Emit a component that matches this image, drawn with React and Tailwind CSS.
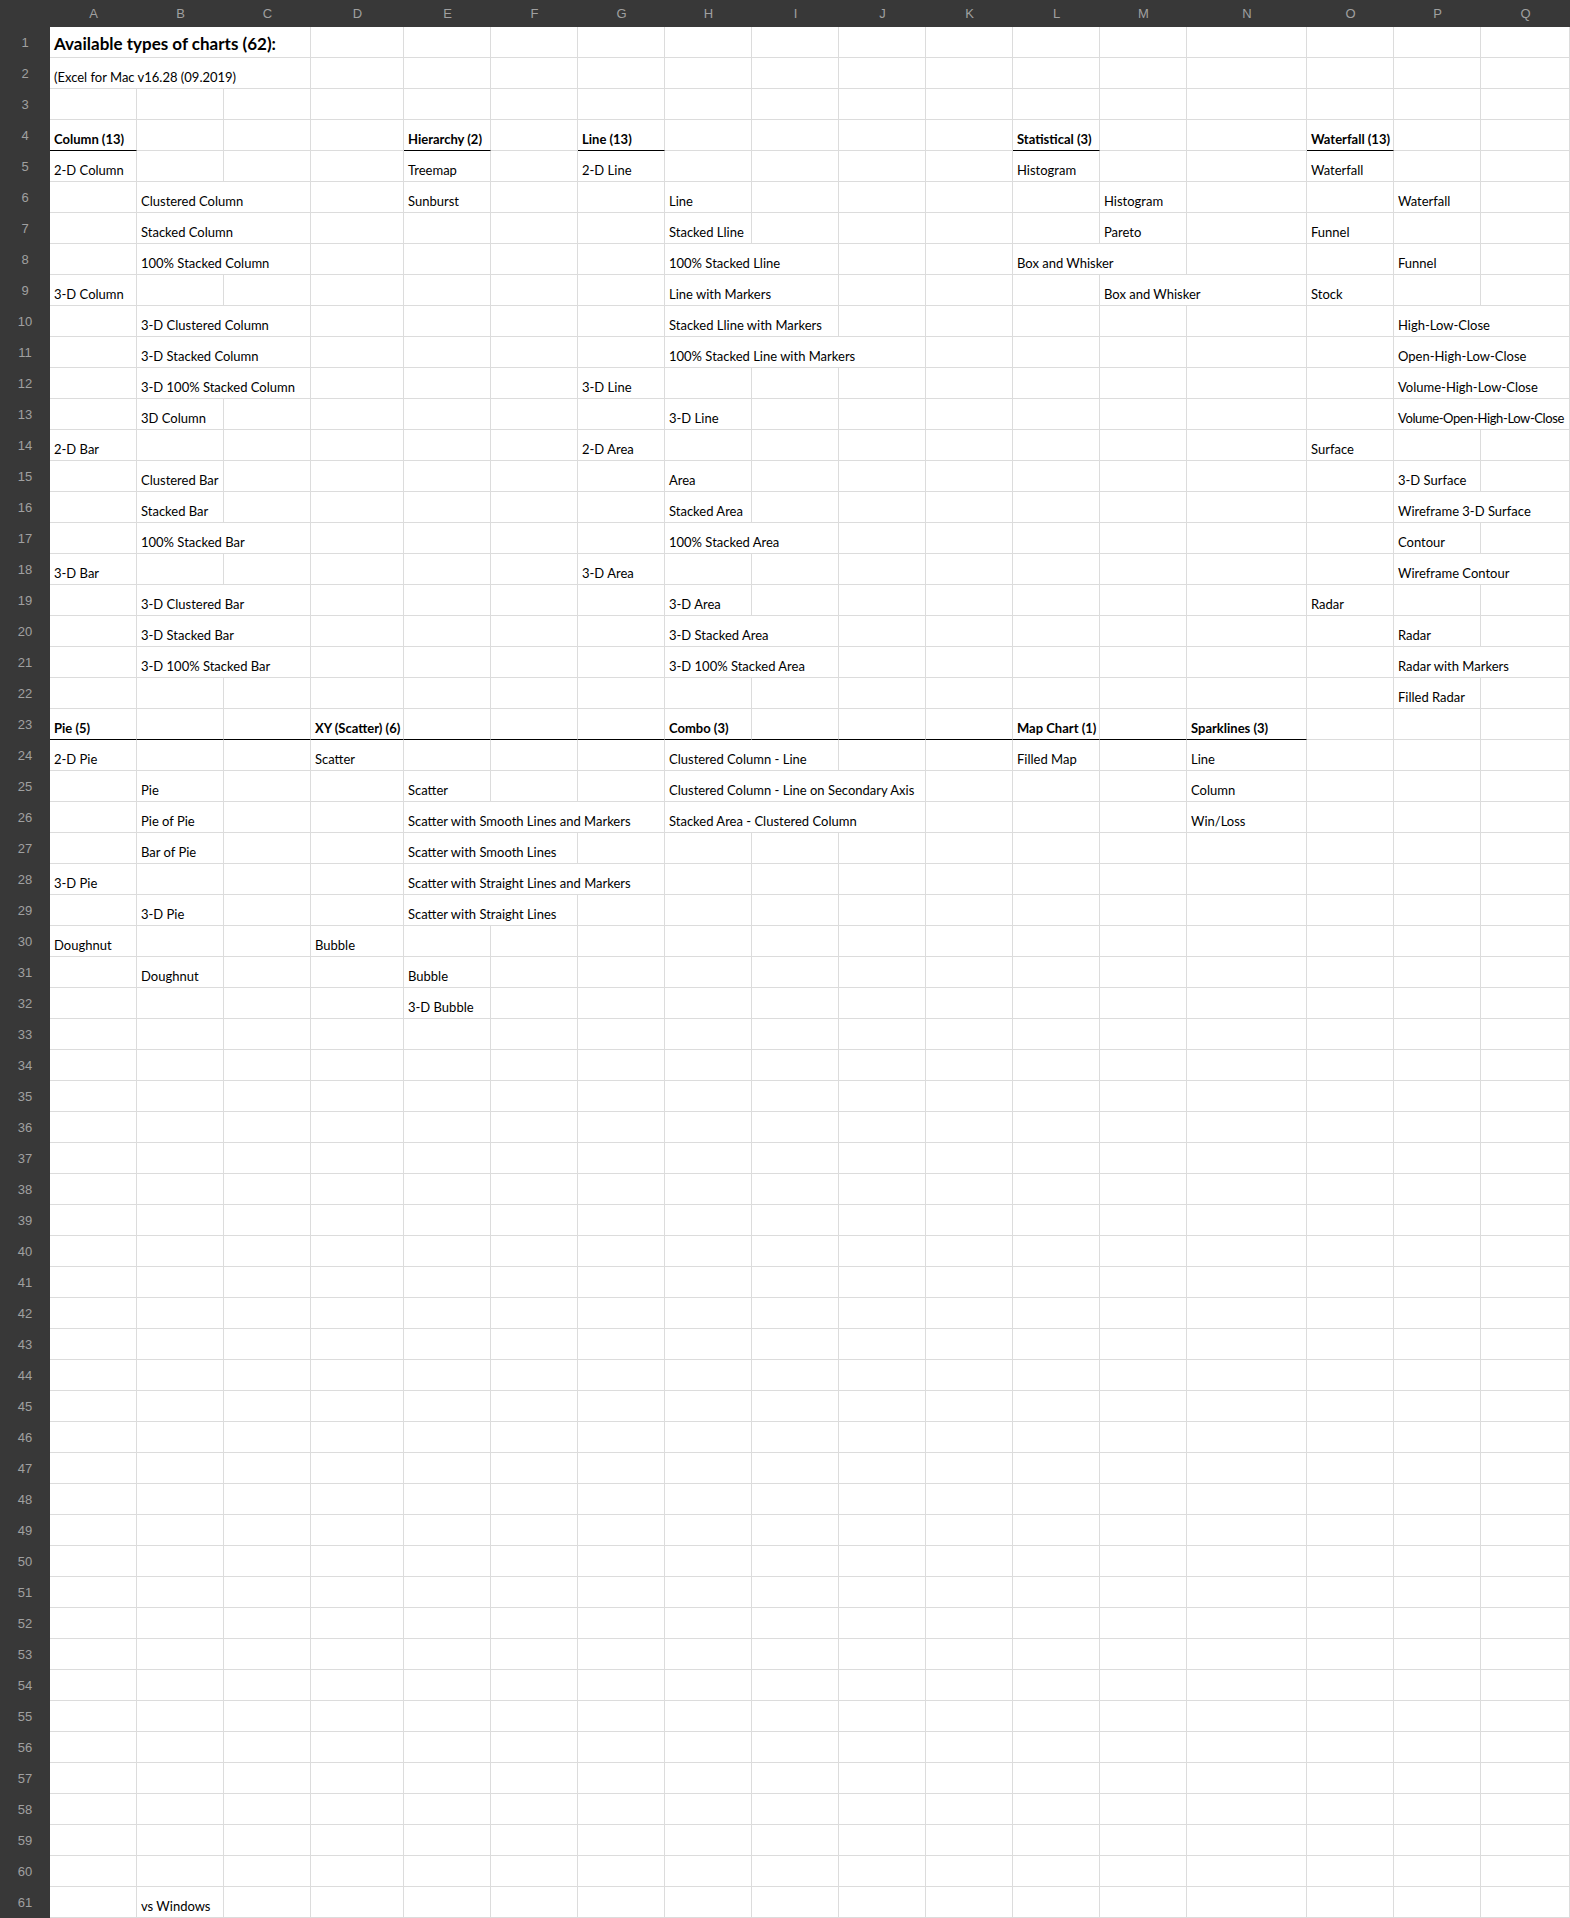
import React from 'react';

const COLS = ['A', 'B', 'C', 'D', 'E', 'F', 'G', 'H', 'I', 'J', 'K', 'L', 'M', 'N', 'O', 'P', 'Q'];
const WIDTHS = [87, 87, 87, 93, 87, 87, 87, 87, 87, 87, 87, 87, 87, 120, 87, 87, 89];

const W_CLASS = {
  87: 'w-[87px]',
  89: 'w-[89px]',
  93: 'w-[93px]',
  120: 'w-[120px]',
  174: 'w-[174px]',
  176: 'w-[176px]',
  207: 'w-[207px]',
  261: 'w-[261px]'
};

// [column, text, span, kind]
const ROWS = {
  1: [['A', 'Available types of charts (62):', 3, 'title']],
  2: [['A', '(Excel for Mac v16.28 (09.2019)', 3]],
  4: [['A', 'Column (13)', 1, 'head'], ['E', 'Hierarchy (2)', 1, 'head'], ['G', 'Line (13)', 1, 'head'], ['L', 'Statistical (3)', 1, 'head'], ['O', 'Waterfall (13)', 1, 'head']],
  5: [['A', '2-D Column'], ['E', 'Treemap'], ['G', '2-D Line'], ['L', 'Histogram'], ['O', 'Waterfall']],
  6: [['B', 'Clustered Column', 2], ['E', 'Sunburst'], ['H', 'Line'], ['M', 'Histogram'], ['P', 'Waterfall']],
  7: [['B', 'Stacked Column', 2], ['H', 'Stacked Lline'], ['M', 'Pareto'], ['O', 'Funnel']],
  8: [['B', '100% Stacked Column', 2], ['H', '100% Stacked Lline', 2], ['L', 'Box and Whisker', 2], ['P', 'Funnel']],
  9: [['A', '3-D Column'], ['H', 'Line with Markers', 2], ['M', 'Box and Whisker', 2], ['O', 'Stock']],
  10: [['B', '3-D Clustered Column', 2], ['H', 'Stacked Lline with Markers', 2], ['P', 'High-Low-Close', 2]],
  11: [['B', '3-D Stacked Column', 2], ['H', '100% Stacked Line with Markers', 3], ['P', 'Open-High-Low-Close', 2]],
  12: [['B', '3-D 100% Stacked Column', 2], ['G', '3-D Line'], ['P', 'Volume-High-Low-Close', 2]],
  13: [['B', '3D Column'], ['H', '3-D Line'], ['P', 'Volume-Open-High-Low-Close', 2, 'tight']],
  14: [['A', '2-D Bar'], ['G', '2-D Area'], ['O', 'Surface']],
  15: [['B', 'Clustered Bar'], ['H', 'Area'], ['P', '3-D Surface']],
  16: [['B', 'Stacked Bar'], ['H', 'Stacked Area'], ['P', 'Wireframe 3-D Surface', 2]],
  17: [['B', '100% Stacked Bar', 2], ['H', '100% Stacked Area', 2], ['P', 'Contour']],
  18: [['A', '3-D Bar'], ['G', '3-D Area'], ['P', 'Wireframe Contour', 2]],
  19: [['B', '3-D Clustered Bar', 2], ['H', '3-D Area'], ['O', 'Radar']],
  20: [['B', '3-D Stacked Bar', 2], ['H', '3-D Stacked Area', 2], ['P', 'Radar']],
  21: [['B', '3-D 100% Stacked Bar', 2], ['H', '3-D 100% Stacked Area', 2], ['P', 'Radar with Markers', 2]],
  22: [['P', 'Filled Radar']],
  23: [['A', 'Pie (5)', 1, 'head'], ['D', 'XY (Scatter) (6)', 1, 'head'], ['H', 'Combo (3)', 1, 'head'], ['L', 'Map Chart (1)', 1, 'head'], ['N', 'Sparklines (3)', 1, 'head']],
  24: [['A', '2-D Pie'], ['D', 'Scatter'], ['H', 'Clustered Column - Line', 2], ['L', 'Filled Map'], ['N', 'Line']],
  25: [['B', 'Pie'], ['E', 'Scatter'], ['H', 'Clustered Column - Line on Secondary Axis', 3], ['N', 'Column']],
  26: [['B', 'Pie of Pie'], ['E', 'Scatter with Smooth Lines and Markers', 3], ['H', 'Stacked Area - Clustered Column', 3], ['N', 'Win/Loss']],
  27: [['B', 'Bar of Pie'], ['E', 'Scatter with Smooth Lines', 2]],
  28: [['A', '3-D Pie'], ['E', 'Scatter with Straight Lines and Markers', 3]],
  29: [['B', '3-D Pie'], ['E', 'Scatter with Straight Lines', 2]],
  30: [['A', 'Doughnut'], ['D', 'Bubble']],
  31: [['B', 'Doughnut'], ['E', 'Bubble']],
  32: [['E', '3-D Bubble']],
  61: [['B', 'vs Windows']]
};

// cells with a black rule under them
const UNDERLINE = {
  4: ['A', 'E', 'G', 'L', 'O'],
  23: ['A', 'B', 'C', 'D', 'E', 'F', 'G', 'H', 'I', 'J', 'K', 'L', 'M', 'N']
};

function Row({ n }) {
  const items = ROWS[n] || [];
  const under = UNDERLINE[n] || [];
  const cells = [];

  for (let i = 0; i < COLS.length;) {
    const hit = items.find(c => c[0] === COLS[i]);
    const span = hit ? hit[2] || 1 : 1;
    const width = WIDTHS.slice(i, i + span).reduce((a, b) => a + b, 0);
    const ruled = under.includes(COLS[i]);
    const kind = hit ? hit[3] : null;

    cells.push(
      <div
        key={COLS[i]}
        className={`${W_CLASS[width]} h-full shrink-0 flex items-end pl-[4px] border-r border-r-[#dcdcdc] border-b ${ruled ? 'border-b-black' : 'border-b-[#dcdcdc]'}`}
      >
        {hit && (
          <span
            className={`whitespace-nowrap text-black ${kind === 'title' ? 'text-[17px] font-bold leading-[22px] pb-[2px]' : 'text-[13px] leading-[16px] pb-[3px]'} ${kind === 'head' ? 'font-bold' : ''} ${kind === 'tight' ? 'tracking-[-0.4px]' : ''}`}
          >
            {hit[1]}
          </span>
        )}
      </div>
    );
    i += span;
  }

  return (
    <div className="flex h-[31px]">
      <div className="w-[50px] shrink-0 h-full bg-[#383838] flex items-center justify-center text-[13px] text-[#a0a0a0] font-['Liberation_Sans',sans-serif]">
        {n}
      </div>
      {cells}
    </div>
  );
}

export default function App() {
  const rows = Array.from({ length: 61 }, (_, i) => i + 1);

  return (
    <div className="w-[1570px] h-[1918px] overflow-hidden bg-white font-['Lato',sans-serif]">
      <div className="flex h-[27px] bg-[#383838]">
        <div className="w-[50px] shrink-0" />
        {COLS.map((c, i) => (
          <div
            key={c}
            className={`${W_CLASS[WIDTHS[i]]} shrink-0 flex items-center justify-center text-[13px] text-[#a0a0a0] font-['Liberation_Sans',sans-serif]`}
          >
            {c}
          </div>
        ))}
      </div>
      {rows.map(n => <Row key={n} n={n} />)}
    </div>
  );
}
